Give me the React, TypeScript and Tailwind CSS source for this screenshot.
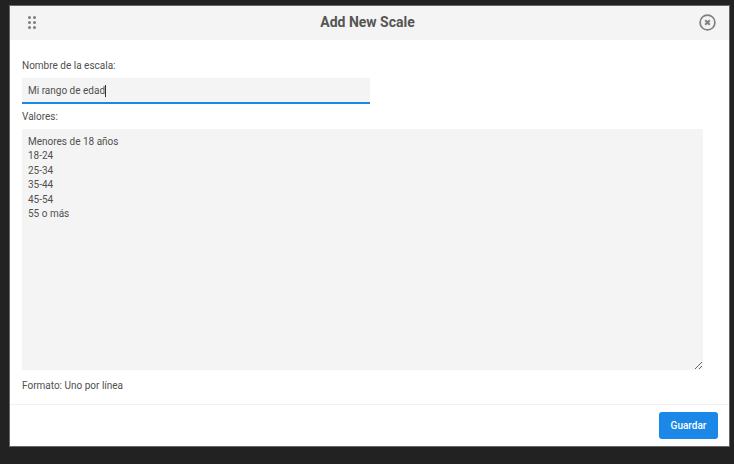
const values = `Menores de 18 años
18-24
25-34
35-44
45-54
55 o más`;

export default function App() {
  return (
    <div className="h-[464px] w-[734px] overflow-hidden bg-[#222222] pl-[10px] pr-[5px] pt-[6px] font-['Roboto',sans-serif] text-[#505050]">
      {/* Modal */}
      <div className="flex h-[440px] w-[719px] flex-col bg-white shadow-[0_0_0_1px_#666666]">
        <div className="flex h-[34px] shrink-0 items-center justify-between bg-[#f4f4f4] pl-[18px] pr-[13px]">
          <svg className="-mt-[1px]" width="8" height="13" viewBox="0 0 8 13" fill="#7d7d7d">
            <circle cx="1.5" cy="1.5" r="1.5" />
            <circle cx="6.5" cy="1.5" r="1.5" />
            <circle cx="1.5" cy="6.5" r="1.5" />
            <circle cx="6.5" cy="6.5" r="1.5" />
            <circle cx="1.5" cy="11.5" r="1.5" />
            <circle cx="6.5" cy="11.5" r="1.5" />
          </svg>
          <h1 className="-mt-[2px] text-[14px] font-bold text-[#555555]">Add New Scale</h1>
          <svg className="-mt-[1px]" width="17" height="17" viewBox="0 0 17 17" fill="none" stroke="#808080">
            <circle cx="8.5" cy="8.5" r="7.4" strokeWidth="1.7" />
            <path d="M6.2 6.2l4.6 4.6M10.8 6.2l-4.6 4.6" strokeWidth="2" />
          </svg>
        </div>

        <div className="flex flex-1 flex-col px-3 pt-[18px] text-[10px] leading-[16px]">
          <label>Nombre de la escala:</label>
          <div className="mt-[4px] flex h-[26px] w-[348px] items-center border-b-2 border-[#1b87e6] bg-[#f4f4f4] px-[6px] pt-[1px]">
            <span>Mi rango de edad</span>
            <span className="h-[12px] w-px bg-[#333333]" />
          </div>
          <label className="mt-[5px]">Valores:</label>
          <textarea
            defaultValue={values}
            className="mt-[4px] h-[241px] w-[681px] bg-[#f4f4f4] px-[6px] py-[6px] leading-[14.4px] outline-none"
          />
          <p className="mt-[8px]">Formato: Uno por línea</p>
        </div>

        <div className="flex h-[42px] shrink-0 items-start justify-end border-t border-[#f0f0f0] pr-[11px] pt-[7px]">
          <button className="h-[27px] w-[59px] rounded-[3px] bg-[#1b87e6] text-[10px] font-medium text-white">
            Guardar
          </button>
        </div>
      </div>
    </div>
  );
}
